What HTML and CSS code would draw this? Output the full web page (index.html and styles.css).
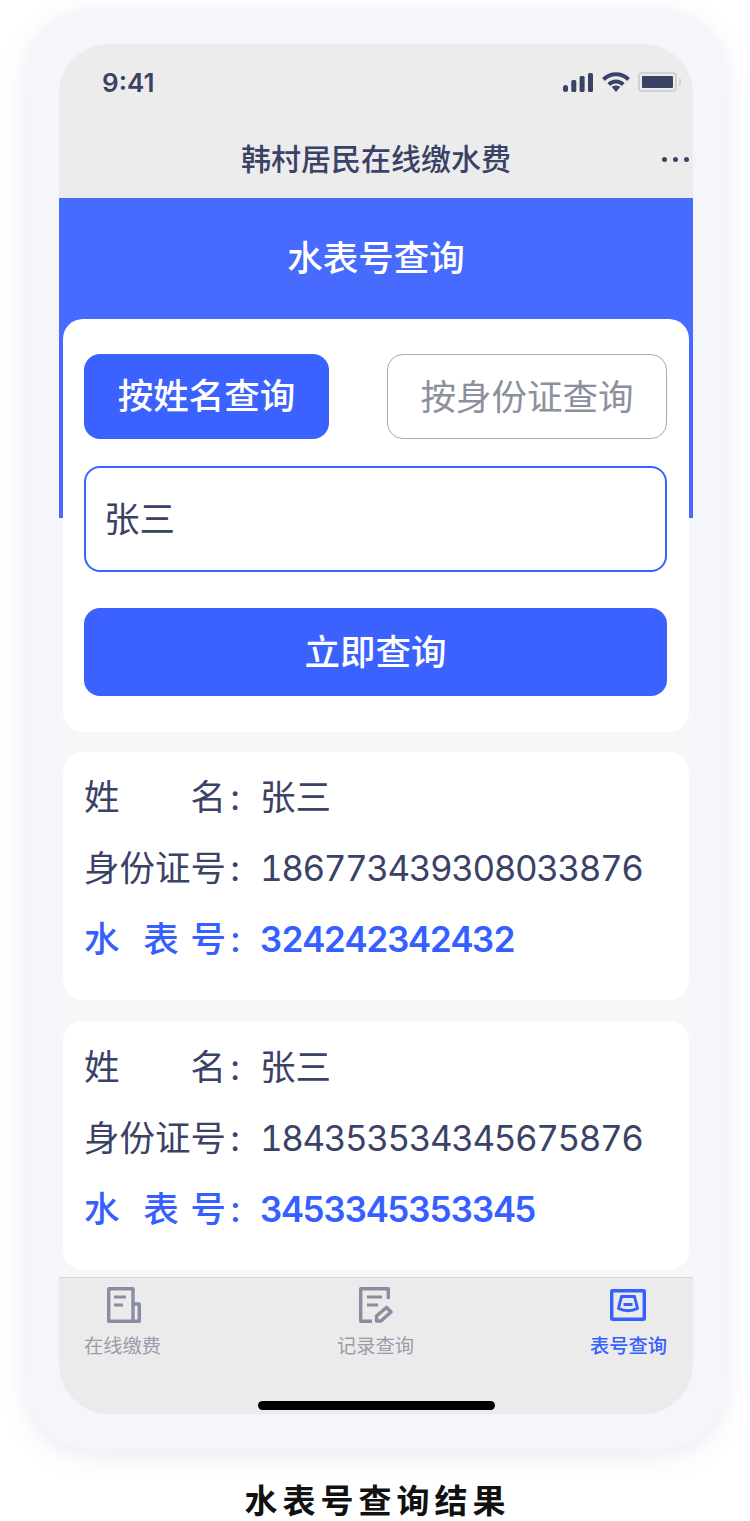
FILE: index.html
```html
<!DOCTYPE html>
<html lang="zh-CN">
<head>
    <meta charset="UTF-8">
    <meta name="viewport" content="width=device-width, initial-scale=1.0">
    <title>水表号查询结果</title>
    <link rel="stylesheet" href="styles.css">
</head>
<body>

    <div class="frame">
        <div class="screen">
            <div class="status-bar">
                <span class="clock">9:41</span>
                <div class="status-icons">
                    <svg width="30" height="19" viewBox="0 0 30 19">
                        <rect x="0" y="12" width="5" height="7" rx="2.5" fill="#3a4266"/>
                        <rect x="8.300" y="7" width="5" height="12" rx="1.500" fill="#3a4266"/>
                        <rect x="16.600" y="3" width="5" height="16" rx="1.500" fill="#3a4266"/>
                        <rect x="25" y="0" width="5" height="19" rx="1.500" fill="#3a4266"/>
                    </svg>
                    <svg width="28" height="20" viewBox="0 0 28 20">
                        <path d="M1.500 7.500C8.500 .5 19.500 .5 26.500 7.500" fill="none" stroke="#3a4266" stroke-width="4"/>
                        <path d="M6.800 12.500C11 8.500 17 8.500 21.200 12.500" fill="none" stroke="#3a4266" stroke-width="4"/>
                        <path d="M9.800 15C12.200 13 15.800 13 18.200 15L14 20Z" fill="#3a4266"/>
                    </svg>
                    <div class="battery"><span class="battery-level"></span></div>
                </div>
            </div>

            <div class="nav-bar">
                <span class="nav-title">韩村居民在线缴水费</span>
                <div class="nav-more"><i></i><i></i><i></i></div>
            </div>

            <div class="hero">水表号查询</div>

            <div class="card search-card">
                <div class="tabs">
                    <div class="tab tab-active">按姓名查询</div>
                    <div class="tab tab-plain">按身份证查询</div>
                </div>
                <div class="name-input">张三</div>
                <div class="search-button">立即查询</div>
            </div>

            <div class="card result-card">
                <div class="row"><span class="label"><span>姓</span><span>名</span></span><span class="colon">:</span><span>张三</span></div>
                <div class="row"><span class="label">身份证号</span><span class="colon">:</span><span class="num">186773439308033876</span></div>
                <div class="row row-meter"><span class="label label-meter"><span>水</span><span>表</span><span>号</span></span><span class="colon">:</span><span class="num">324242342432</span></div>
            </div>

            <div class="card result-card">
                <div class="row"><span class="label"><span>姓</span><span>名</span></span><span class="colon">:</span><span>张三</span></div>
                <div class="row"><span class="label">身份证号</span><span class="colon">:</span><span class="num">184353534345675876</span></div>
                <div class="row row-meter"><span class="label label-meter"><span>水</span><span>表</span><span>号</span></span><span class="colon">:</span><span class="num">3453345353345</span></div>
            </div>

            <div class="tab-bar">
                <div class="tab-items">
                    <div class="tab-item">
                        <svg class="icon-pay" width="34" height="36" viewBox="0 0 34 36">
                            <path d="M26 34.300H1.700V1.700H26V34.300H32.300V17H26" fill="none" stroke="#8a8d9f" stroke-width="3.400" stroke-linejoin="round"/>
                            <path d="M7 10H19M7 18H16" fill="none" stroke="#8a8d9f" stroke-width="3.200"/>
                        </svg>
                        <span>在线缴费</span>
                    </div>
                    <div class="tab-item">
                        <svg width="34" height="36" viewBox="0 0 34 36">
                            <path d="M13 34.300H1.700V1.700H29.300V12" fill="none" stroke="#8a8d9f" stroke-width="3.400" stroke-linejoin="round"/>
                            <path d="M8 10H23M8 18H19" fill="none" stroke="#8a8d9f" stroke-width="3.200"/>
                            <path d="M17.500 34V29L27.500 20.500L32 25L22 34Z" fill="none" stroke="#8a8d9f" stroke-width="3.400" stroke-linejoin="round"/>
                        </svg>
                        <span>记录查询</span>
                    </div>
                    <div class="tab-item tab-item-active">
                        <svg width="36" height="36" viewBox="0 -2 36 36">
                            <rect x="1.700" y="1.700" width="32.600" height="28.600" rx="1" fill="none" stroke="#3560ff" stroke-width="3.400"/>
                            <path d="M11.500 7.500H24.500L27.500 19.500Q18 24 8.500 19.500Z" fill="none" stroke="#3560ff" stroke-width="3" stroke-linejoin="round"/>
                            <path d="M13.500 15.500H22.500" stroke="#3560ff" stroke-width="3"/>
                        </svg>
                        <span>表号查询</span>
                    </div>
                </div>
                <div class="home-bar"></div>
            </div>
        </div>
    </div>

    <h2 class="caption">水表号查询结果</h2>

</body>
</html>
```

FILE: styles.css
```css
body {
    margin: 0;
    background-color: #fff;
    font-family: Inter, "Noto Sans CJK SC", sans-serif;
    color: #3a4266;
}
.frame {
    box-sizing: border-box;
    width: 700px;
    height: 1440px;
    margin: 9px 0 0 26px;
    padding: 35px 33px;
    background-color: #f4f6f9;
    border-radius: 64px;
    box-shadow: 0 6px 24px rgba(150, 165, 195, 0.22);
}
.screen {
    height: 1370px;
    overflow: hidden;
    background-color: #f7f7f7;
    border-radius: 50px;
}

/* Barre de statut */
.status-bar {
    height: 90px;
    background-color: #edecec;
    display: flex;
    justify-content: space-between;
    align-items: flex-start;
    padding: 22px 16px 0 43px;
    box-sizing: border-box;
}
.clock {
    font-size: 26px;
    font-weight: 600;
    line-height: 34px;
}
.status-icons {
    display: flex;
    align-items: flex-start;
    gap: 8px;
    padding-top: 6px;
}
.status-icons svg:first-child {
    margin: 1px 1px 0 0;
}
.battery {
    box-sizing: border-box;
    width: 39px;
    height: 20px;
    padding: 2px;
    border: 2px solid #cfd0d8;
    border-radius: 4px;
    position: relative;
}
.battery::after {
    content: "";
    position: absolute;
    right: -6px;
    top: 4px;
    width: 2px;
    height: 8px;
    background-color: #cfd0d8;
    border-radius: 0 2px 2px 0;
}
.battery-level {
    display: block;
    height: 100%;
    background-color: #3a4266;
    border-radius: 1px;
}

.nav-bar {
    height: 64px;
    background-color: #edecec;
    display: flex;
    justify-content: center;
    align-items: flex-start;
    position: relative;
}
.nav-title {
    font-size: 30px;
    font-weight: 500;
    line-height: 50px;
}
.nav-more {
    position: absolute;
    right: 4px;
    top: 23px;
    display: flex;
    gap: 6px;
}
.nav-more i {
    width: 5px;
    height: 5px;
    border-radius: 50%;
    background-color: #3a4266;
}

.hero {
    height: 320px;
    box-sizing: border-box;
    padding-top: 36px;
    background-color: #476bff;
    color: #fff;
    font-size: 35.5px;
    font-weight: 500;
    line-height: 50px;
    text-align: center;
}

/* Cartes */
.card {
    margin: 0 4px;
    background-color: #fff;
    border-radius: 20px;
    box-sizing: border-box;
}
.search-card {
    height: 413px;
    margin-top: -199px;
    padding: 35px 22px 0 21px;
    position: relative;
}
.tabs {
    display: flex;
    justify-content: space-between;
}
.tab {
    box-sizing: border-box;
    height: 85px;
    border-radius: 16px;
    font-size: 35.5px;
    line-height: 86px;
    text-align: center;
}
.tab-active {
    width: 245px;
    background-color: #3b62ff;
    color: #fff;
    font-weight: 500;
}
.tab-plain {
    width: 280px;
    border: 1px solid #a9a9b0;
    color: #8c8f9e;
}
.name-input {
    box-sizing: border-box;
    height: 106px;
    margin-top: 27px;
    padding-left: 18px;
    border: 2px solid #3b62ff;
    border-radius: 16px;
    font-size: 35.5px;
    line-height: 103px;
}
.search-button {
    height: 88px;
    margin-top: 36px;
    background-color: #3b62ff;
    border-radius: 16px;
    color: #fff;
    font-size: 35.5px;
    font-weight: 500;
    line-height: 90px;
    text-align: center;
}
.result-card {
    height: 248px;
    margin-top: 20px;
    padding: 10px 21px 0;
}
.result-card + .result-card {
    height: 249px;
    margin-top: 21px;
    padding-top: 11px;
}
.row {
    display: flex;
    font-size: 35.5px;
    line-height: 71px;
}
.label {
    width: 142px;
    display: flex;
    justify-content: space-between;
}
.label-meter span:nth-child(2) {
    margin-left: 12px;
}
.colon {
    width: 34px;
    padding-left: 4px;
    box-sizing: border-box;
}
.num {
    font-size: 35px;
    font-variant-numeric: tabular-nums;
    letter-spacing: -1.45px;
}
.row-meter {
    color: #3560ff;
    font-weight: 500;
}
.row-meter .num {
    font-weight: 600;
}

/* Barre du bas */
.tab-bar {
    box-sizing: border-box;
    height: 137px;
    margin-top: 7px;
    border-top: 1px solid #d6d6d6;
    background-color: #ebebeb;
    padding-top: 9px;
}
.tab-items {
    display: flex;
    justify-content: space-between;
    padding: 0 26px 0 25px;
}
.tab-item {
    display: flex;
    flex-direction: column;
    align-items: center;
    gap: 10px;
    color: #9a9ca9;
    font-size: 19.3px;
    line-height: 26px;
}
.icon-pay {
    margin-left: 3px;
}
.tab-item-active {
    color: #3560ff;
    font-weight: 500;
}
.home-bar {
    width: 237px;
    height: 9px;
    margin: 42px auto 0;
    background-color: #000;
    border-radius: 5px;
}

.caption {
    margin: 30px 0 0;
    padding-left: 5px;
    color: #111;
    font-size: 33px;
    font-weight: 700;
    letter-spacing: 5px;
    line-height: 44px;
    text-align: center;
}
```
